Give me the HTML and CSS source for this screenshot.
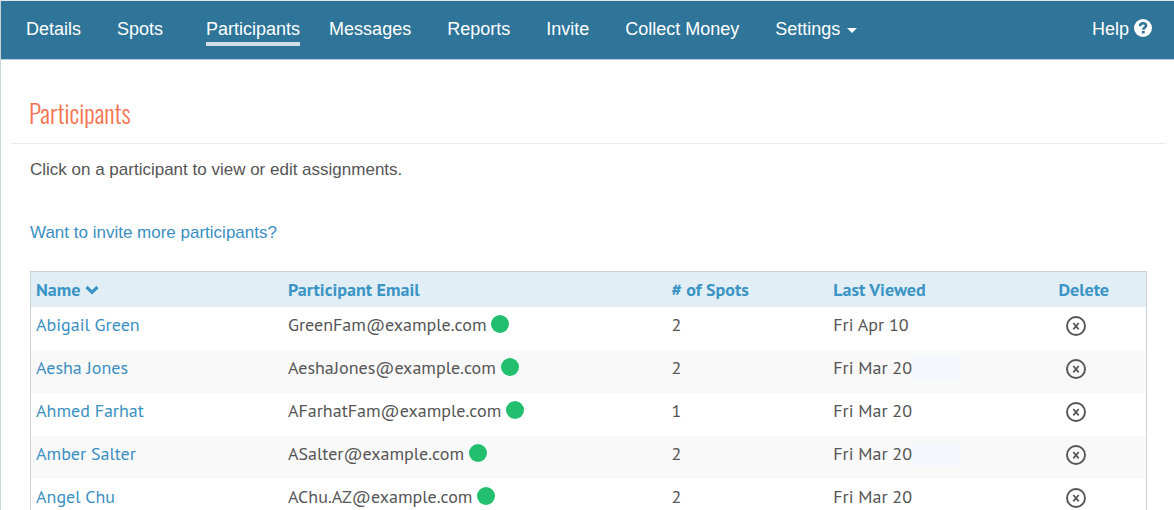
FILE: index.html
```html
<!DOCTYPE html>
<html lang="en">
<head>
<meta charset="utf-8">
<title>Participants</title>
<link rel="stylesheet" href="styles.css">
</head>
<body>
<svg class="symbols" aria-hidden="true">
  <symbol id="delete-icon" viewBox="0 0 20 20">
    <circle cx="10" cy="10" r="9" fill="none" stroke="currentColor" stroke-width="1.9"/>
    <path d="M7.3 7l5.4 6.4M12.7 7l-5.4 6.4" fill="none" stroke="currentColor" stroke-width="1.7"/>
  </symbol>
</svg>
<div class="page">
  <header class="topbar">
    <nav class="nav" aria-label="Main">
      <a class="nav-link" href="#">Details</a>
      <a class="nav-link" href="#">Spots</a>
      <a class="nav-link active" href="#" aria-current="page">Participants</a>
      <a class="nav-link" href="#">Messages</a>
      <a class="nav-link" href="#">Reports</a>
      <a class="nav-link" href="#">Invite</a>
      <a class="nav-link" href="#">Collect Money</a>
      <button class="nav-link menu" type="button">Settings <span class="caret"></span></button>
    </nav>
    <a class="help" href="#">Help
      <svg class="help-icon" viewBox="0 0 18 18" aria-hidden="true">
        <circle cx="9" cy="9" r="9" fill="#fff"/>
        <path d="M6 7.2C6 5.2 7.3 4.2 9.1 4.2c1.7 0 3 .9 3 2.4 0 2-2.8 1.9-2.8 4.2" fill="none" stroke="#2e7599" stroke-width="2.6"/>
        <path d="M7.9 12h2.8v2.5H7.9z" fill="#2e7599"/>
      </svg>
    </a>
  </header>
  <main>
    <h1 class="title">Participants</h1>
    <div class="content">
      <p class="intro">Click on a participant to view or edit assignments.</p>
      <p class="invite"><a href="#">Want to invite more participants?</a></p>
      <table class="people">
        <colgroup><col class="c-name"><col class="c-email"><col class="c-spots"><col class="c-viewed"><col></colgroup>
        <thead>
          <tr>
            <th scope="col">Name <svg class="sort" viewBox="0 0 14 10" aria-hidden="true"><path d="M1.5 2L7 7.3 12.5 2" fill="none" stroke="currentColor" stroke-width="3.2"/></svg></th>
            <th scope="col">Participant Email</th>
            <th scope="col"># of Spots</th>
            <th scope="col">Last Viewed</th>
            <th scope="col">Delete</th>
          </tr>
        </thead>
        <tbody>
          <tr>
            <td><a href="#">Abigail Green</a></td>
            <td>GreenFam@example.com <span class="dot"></span></td>
            <td>2</td>
            <td>Fri Apr 10</td>
            <td><button class="delete" type="button" aria-label="Delete Abigail Green"><svg><use href="#delete-icon"/></svg></button></td>
          </tr>
          <tr>
            <td><a href="#">Aesha Jones</a></td>
            <td>AeshaJones@example.com <span class="dot"></span></td>
            <td>2</td>
            <td><span class="date">Fri Mar 20<span class="patch"></span></span></td>
            <td><button class="delete" type="button" aria-label="Delete Aesha Jones"><svg><use href="#delete-icon"/></svg></button></td>
          </tr>
          <tr>
            <td><a href="#">Ahmed Farhat</a></td>
            <td>AFarhatFam@example.com <span class="dot"></span></td>
            <td>1</td>
            <td>Fri Mar 20</td>
            <td><button class="delete" type="button" aria-label="Delete Ahmed Farhat"><svg><use href="#delete-icon"/></svg></button></td>
          </tr>
          <tr>
            <td><a href="#">Amber Salter</a></td>
            <td>ASalter@example.com <span class="dot"></span></td>
            <td>2</td>
            <td><span class="date">Fri Mar 20<span class="patch"></span></span></td>
            <td><button class="delete" type="button" aria-label="Delete Amber Salter"><svg><use href="#delete-icon"/></svg></button></td>
          </tr>
          <tr>
            <td><a href="#">Angel Chu</a></td>
            <td>AChu.AZ@example.com <span class="dot"></span></td>
            <td>2</td>
            <td>Fri Mar 20</td>
            <td><button class="delete" type="button" aria-label="Delete Angel Chu"><svg><use href="#delete-icon"/></svg></button></td>
          </tr>
        </tbody>
      </table>
    </div>
  </main>
</div>
</body>
</html>
```
FILE: styles.css
```css
* { box-sizing: border-box; }
body {
  margin: 0;
  background: #fff;
  color: #555;
  font: 18px/24px "Liberation Sans", Arial, sans-serif;
}
a { color: #3a8fc2; text-decoration: none; }
.symbols { display: none; }
.page {
  height: 100vh;
  overflow: auto;
  scrollbar-width: none;
  border-top: 1px solid #dfe9ed;
  border-left: 1px solid #c9d6dc;
}
.topbar {
  display: flex;
  justify-content: space-between;
  align-items: flex-start;
  height: 59px;
  padding: 16px 22px 0 25px;
  background: #2e7599;
  border-bottom: 1px solid #b9ced9;
}
.nav { display: flex; align-items: flex-start; gap: 29px; }
.nav-link {
  padding: 0 7px 0 0;
  border: 0;
  background: none;
  color: #fff;
  font: inherit;
  white-space: nowrap;
}
.active {
  margin-left: 7px;
  padding: 0 0 1px;
  border-bottom: 4px solid #d3dfe7;
}
.menu { display: flex; align-items: center; gap: 7px; }
.caret {
  margin-top: 3px;
  border: 5px solid transparent;
  border-top-color: #fff;
  border-bottom: 0;
}
.help { display: flex; gap: 5px; color: #fff; }
.help-icon { width: 18px; height: 18px; margin-top: 2px; }
.title {
  margin: 0 8px 0 10px;
  padding: 34px 18px 12px;
  border-bottom: 1px solid #e3edf3;
  color: #f47350;
  font: 300 25px/37px Oswald, "Open Sans Condensed", "Liberation Sans Narrow", sans-serif;
}
.content { padding: 14px 27px 0 29px; font-size: 17px; }
.intro { margin: 0 0 39px; }
.invite { margin: 0 0 26px; }
.people {
  width: 100%;
  table-layout: fixed;
  border: 1px solid #ccd3d7;
  border-spacing: 0;
  font: 18px/24px "PT Sans", "Noto Sans", sans-serif;
}
.c-name { width: 22.6%; }
.c-email { width: 34.4%; }
.c-spots { width: 14.5%; }
.c-viewed { width: 20.2%; }
.people th {
  height: 35px;
  padding: 0 5px;
  background: #e1eef6;
  color: #3a94c4;
  text-align: left;
  white-space: nowrap;
}
.people td { height: 43px; padding: 0 5px 7px; white-space: nowrap; }
.people tbody tr:nth-child(even) { background: #f9f9f9; }
.sort { width: 14px; height: 10px; vertical-align: 1px; }
.dot {
  display: inline-block;
  width: 18px;
  height: 18px;
  border-radius: 50%;
  background: #21bf6e;
  vertical-align: -2px;
}
.date { display: flex; }
.patch { width: 48px; background: #f4f8fc; }
.delete {
  display: block;
  margin: 2px 0 0 8px;
  padding: 0;
  border: 0;
  background: none;
  color: #555;
}
.delete svg { display: block; width: 20px; height: 20px; }
```
